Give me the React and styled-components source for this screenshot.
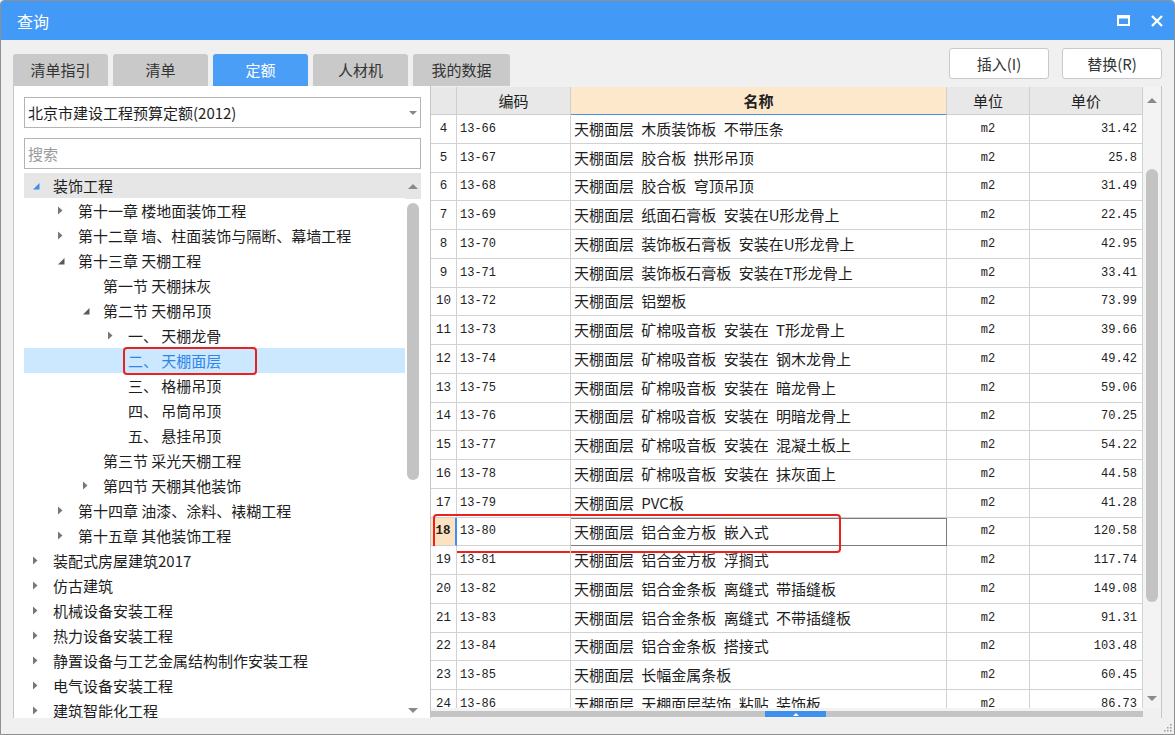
import React from "react";
import styled, { createGlobalStyle } from "styled-components";

const GlobalStyle = createGlobalStyle`
  html, body {
    margin: 0;
    padding: 0;
  }
  body {
    font-family: "Noto Sans CJK SC", "Microsoft YaHei", sans-serif;
    font-size: 15px;
    color: #1e1e1e;
  }
  * {
    box-sizing: border-box;
  }
`;

const Window = styled.div`
  width: 1175px;
  height: 735px;
  display: flex;
  flex-direction: column;
  background: #f0f0f0;
  border: 1px solid #8f8f8f;
  border-radius: 4px 4px 0 0;
  overflow: hidden;
`;

const TitleBar = styled.div`
  height: 39px;
  flex: none;
  background: #4399f6;
  display: flex;
  align-items: center;
  padding: 0 0 0 16px;
  color: #fff;
`;

const Title = styled.div`
  flex: 1;
  font-size: 16px;
  line-height: 20px;
`;

const TitleButton = styled.div`
  width: 34px;
  height: 30px;
  display: flex;
  align-items: center;
  justify-content: center;
`;

const Body = styled.div`
  flex: 1;
  display: flex;
  flex-direction: column;
  padding: 0 12px;
`;

const TopBar = styled.div`
  height: 46px;
  flex: none;
  display: flex;
  justify-content: space-between;
  align-items: flex-start;
`;

const Tabs = styled.div`
  display: flex;
  gap: 5px;
  margin-top: 14px;
`;

const Tab = styled.div`
  width: ${(p) => (p.$wide ? 97 : 95)}px;
  height: 32px;
  border-radius: 3px 3px 0 0;
  background: ${(p) => (p.$active ? "#4a9ef6" : "#c9c9c9")};
  color: ${(p) => (p.$active ? "#fff" : "#333")};
  display: flex;
  align-items: center;
  justify-content: center;
  line-height: 20px;
`;

const Buttons = styled.div`
  display: flex;
  gap: 13px;
  margin-top: 8px;
`;

const Button = styled.div`
  width: 100px;
  height: 31px;
  background: #fff;
  border: 1px solid #c9c9c9;
  border-radius: 3px;
  display: flex;
  align-items: center;
  justify-content: center;
  color: #333;
  line-height: 20px;
`;

const Content = styled.div`
  height: 632px;
  flex: none;
  display: flex;
`;

const LeftPane = styled.div`
  width: 418px;
  flex: none;
  background: #fff;
  border-left: 1px solid #c6c6c6;
  border-right: 1px solid #c6c6c6;
  padding: 11px 9px 0 10px;
  display: flex;
  flex-direction: column;
`;

const Field = styled.div`
  height: 31px;
  flex: none;
  border: 1px solid #b4b4b4;
  display: flex;
  align-items: center;
  padding: 0 3px 0 3px;
  margin-bottom: ${(p) => p.$gap}px;
  color: ${(p) => (p.$placeholder ? "#9a9a9a" : "#1e1e1e")};
  line-height: 20px;
`;

const FieldText = styled.span`
  flex: 1;
`;

const Tree = styled.div`
  flex: 1;
  display: flex;
  overflow: hidden;
`;

const TreeList = styled.div`
  flex: 1;
  overflow: hidden;
`;

const TreeRow = styled.div`
  height: 25px;
  display: flex;
  align-items: center;
  padding-left: ${(p) => 5 + p.$level * 25}px;
  background: ${(p) => (p.$selected ? "#cce8ff" : p.$head ? "#e6e6e6" : "transparent")};
  color: ${(p) => (p.$selected ? "#2f86e8" : "#1e1e1e")};
  white-space: nowrap;
  line-height: 20px;
`;

const Expander = styled.span`
  width: 24px;
  flex: none;
  display: flex;
  align-items: center;
  padding-left: 3px;
`;

const Marked = styled.span`
  position: relative;

  &::after {
    content: "";
    position: absolute;
    left: -5px;
    right: -36px;
    top: -4px;
    bottom: -4px;
    border: 2px solid #e8231f;
    border-radius: 4px;
  }
`;

const VScroll = styled.div`
  width: ${(p) => p.$w}px;
  flex: none;
  display: flex;
  flex-direction: column;
  align-items: center;
  background: ${(p) => p.$bg};
`;

const ScrollArrow = styled.div`
  height: ${(p) => p.$h}px;
  flex: none;
  width: 100%;
  display: flex;
  align-items: center;
  justify-content: center;
  background: ${(p) => p.$bg || "transparent"};
`;

const ScrollTrack = styled.div`
  flex: 1;
  width: 100%;
  display: flex;
  justify-content: center;
  padding-top: ${(p) => p.$top}px;
`;

const Thumb = styled.div`
  width: 12px;
  height: ${(p) => p.$h}px;
  border-radius: 6px;
  background: #c3c3c3;
`;

const GridPane = styled.div`
  flex: 1;
  display: flex;
  flex-direction: column;
  border-right: 1px solid #c6c6c6;
  padding-top: 1px;
`;

const GridMain = styled.div`
  flex: 1;
  display: flex;
  overflow: hidden;
`;

const Table = styled.div`
  width: 712px;
  flex: none;
  background: #fff;
  overflow: hidden;
`;

const cols = "26px 114px 376px 83px 113px";

const HeaderRow = styled.div`
  display: grid;
  grid-template-columns: ${cols};
  height: 28px;
`;

const HeadCell = styled.div`
  display: flex;
  align-items: center;
  justify-content: center;
  background: ${(p) => (p.$hot ? "#fde8cb" : "#e8e8e8")};
  border-right: 1px solid #cfcfcf;
  border-bottom: 1px solid ${(p) => (p.$hot ? "#4a90e2" : "#cfcfcf")};
  font-weight: ${(p) => (p.$hot ? 700 : 400)};
  color: #222;
  line-height: 20px;
`;

const Row = styled.div`
  display: grid;
  grid-template-columns: ${cols};
  height: 28.75px;
  position: relative;

  ${(p) =>
    p.$marked &&
    `
    &::after {
      content: "";
      position: absolute;
      left: 2px;
      top: -4px;
      width: 404px;
      height: 35px;
      border: 2px solid #e8231f;
      border-radius: 4px;
    }
  `}
`;

const Cell = styled.div`
  display: flex;
  align-items: center;
  justify-content: ${(p) => p.$align || "flex-start"};
  padding: 0 ${(p) => (p.$align === "flex-end" ? 5 : 3)}px 0 3px;
  border-right: 1px solid #d2d2d2;
  border-bottom: 1px solid #d2d2d2;
  white-space: nowrap;
  overflow: hidden;
  line-height: 20px;
`;

const NumCell = styled(Cell)`
  justify-content: center;
  padding: 0;
  font-family: "Liberation Mono", monospace;
  font-size: 12.5px;
  background: ${(p) => (p.$current ? "#fde2c2" : "#fff")};
  font-weight: ${(p) => (p.$current ? 700 : 400)};
  border-right: ${(p) => (p.$current ? "2px solid #3d8ff0" : "1px solid #d2d2d2")};
`;

const MonoCell = styled(Cell)`
  font-family: "Liberation Mono", monospace;
  font-size: 12px;
  color: #222;
`;

const NameCell = styled(Cell)`
  word-spacing: 4px;
  border: ${(p) => (p.$focus ? "1px solid #7c7c7c" : undefined)};
  border-left: none;
`;

const HScroll = styled.div`
  height: 10px;
  flex: none;
  width: 712px;
  padding-top: 3px;
  background: #f3f3f3;
`;

const HTrack = styled.div`
  height: 6px;
  background: #c4c4c4;
  position: relative;
`;

const Splitter = styled.div`
  position: absolute;
  left: 334px;
  top: 0;
  width: 61px;
  height: 6px;
  background: #3f90ec;
  display: flex;
  justify-content: center;
  align-items: center;
`;

const Footer = styled.div`
  flex: 1;
  display: flex;
  justify-content: flex-end;
  align-items: flex-end;
  padding: 0 0 2px 0;
  margin-right: -10px;
`;

const treeData = [
  { level: 0, text: "装饰工程", state: "open", head: true },
  { level: 1, text: "第十一章 楼地面装饰工程", state: "closed" },
  { level: 1, text: "第十二章 墙、柱面装饰与隔断、幕墙工程", state: "closed" },
  { level: 1, text: "第十三章 天棚工程", state: "open" },
  { level: 2, text: "第一节 天棚抹灰" },
  { level: 2, text: "第二节 天棚吊顶", state: "open" },
  { level: 3, text: "一、 天棚龙骨", state: "closed" },
  { level: 3, text: "二、 天棚面层", selected: true },
  { level: 3, text: "三、 格栅吊顶" },
  { level: 3, text: "四、 吊筒吊顶" },
  { level: 3, text: "五、 悬挂吊顶" },
  { level: 2, text: "第三节 采光天棚工程" },
  { level: 2, text: "第四节 天棚其他装饰", state: "closed" },
  { level: 1, text: "第十四章 油漆、涂料、裱糊工程", state: "closed" },
  { level: 1, text: "第十五章 其他装饰工程", state: "closed" },
  { level: 0, text: "装配式房屋建筑2017", state: "closed" },
  { level: 0, text: "仿古建筑", state: "closed" },
  { level: 0, text: "机械设备安装工程", state: "closed" },
  { level: 0, text: "热力设备安装工程", state: "closed" },
  { level: 0, text: "静置设备与工艺金属结构制作安装工程", state: "closed" },
  { level: 0, text: "电气设备安装工程", state: "closed" },
  { level: 0, text: "建筑智能化工程", state: "closed" },
];

const rows = [
  [4, "13-66", "天棚面层 木质装饰板 不带压条", "31.42"],
  [5, "13-67", "天棚面层 胶合板 拱形吊顶", "25.8"],
  [6, "13-68", "天棚面层 胶合板 穹顶吊顶", "31.49"],
  [7, "13-69", "天棚面层 纸面石膏板 安装在U形龙骨上", "22.45"],
  [8, "13-70", "天棚面层 装饰板石膏板 安装在U形龙骨上", "42.95"],
  [9, "13-71", "天棚面层 装饰板石膏板 安装在T形龙骨上", "33.41"],
  [10, "13-72", "天棚面层 铝塑板", "73.99"],
  [11, "13-73", "天棚面层 矿棉吸音板 安装在 T形龙骨上", "39.66"],
  [12, "13-74", "天棚面层 矿棉吸音板 安装在 钢木龙骨上", "49.42"],
  [13, "13-75", "天棚面层 矿棉吸音板 安装在 暗龙骨上", "59.06"],
  [14, "13-76", "天棚面层 矿棉吸音板 安装在 明暗龙骨上", "70.25"],
  [15, "13-77", "天棚面层 矿棉吸音板 安装在 混凝土板上", "54.22"],
  [16, "13-78", "天棚面层 矿棉吸音板 安装在 抹灰面上", "44.58"],
  [17, "13-79", "天棚面层 PVC板", "41.28"],
  [18, "13-80", "天棚面层 铝合金方板 嵌入式", "120.58"],
  [19, "13-81", "天棚面层 铝合金方板 浮搁式", "117.74"],
  [20, "13-82", "天棚面层 铝合金条板 离缝式 带插缝板", "149.08"],
  [21, "13-83", "天棚面层 铝合金条板 离缝式 不带插缝板", "91.31"],
  [22, "13-84", "天棚面层 铝合金条板 搭接式", "103.48"],
  [23, "13-85", "天棚面层 长幅金属条板", "60.45"],
  [24, "13-86", "天棚面层 天棚面层装饰 粘贴 装饰板", "86.73"],
];

function Arrow({ state, blue }) {
  if (state === "closed") {
    return (
      <svg width="6" height="9" viewBox="0 0 6 9">
        <path d="M1 0.5 L5.5 4.5 L1 8.5 Z" fill="#777" />
      </svg>
    );
  }
  if (state === "open") {
    return (
      <svg width="8" height="8" viewBox="0 0 8 8">
        <path d="M7.5 1 L7.5 7.5 L1 7.5 Z" fill={blue ? "#3d8fe8" : "#5a5a5a"} />
      </svg>
    );
  }
  return null;
}

function Tri({ up, color = "#8a8a8a", w = 10, h = 5 }) {
  return (
    <svg width={w} height={h} viewBox="0 0 10 5">
      <path d={up ? "M0 5 L5 0 L10 5 Z" : "M0 0 L10 0 L5 5 Z"} fill={color} />
    </svg>
  );
}

export default function App() {
  return (
    <>
      <GlobalStyle />
      <Window>
        <TitleBar>
          <Title>查询</Title>
          <TitleButton>
            <svg width="13" height="11" viewBox="0 0 13 11">
              <rect x="1" y="1" width="11" height="9" fill="none" stroke="#fff" strokeWidth="2" />
              <rect x="1" y="1" width="11" height="2.5" fill="#fff" />
            </svg>
          </TitleButton>
          <TitleButton>
            <svg width="12" height="12" viewBox="0 0 12 12">
              <path d="M1 1 L11 11 M11 1 L1 11" stroke="#fff" strokeWidth="2.4" />
            </svg>
          </TitleButton>
        </TitleBar>
        <Body>
          <TopBar>
            <Tabs>
              <Tab>清单指引</Tab>
              <Tab>清单</Tab>
              <Tab $active>定额</Tab>
              <Tab>人材机</Tab>
              <Tab $wide>我的数据</Tab>
            </Tabs>
            <Buttons>
              <Button>插入(I)</Button>
              <Button>替换(R)</Button>
            </Buttons>
          </TopBar>
          <Content>
            <LeftPane>
              <Field $gap={10}>
                <FieldText>北京市建设工程预算定额(2012)</FieldText>
                <Tri color="#888" w={8} h={4} />
              </Field>
              <Field $gap={4} $placeholder>
                搜索
              </Field>
              <Tree>
                <TreeList>
                  {treeData.map((n, i) => (
                    <TreeRow key={i} $level={n.level} $head={n.head} $selected={n.selected}>
                      <Expander>
                        <Arrow state={n.state} blue={n.head} />
                      </Expander>
                      {n.selected ? <Marked>{n.text}</Marked> : n.text}
                    </TreeRow>
                  ))}
                </TreeList>
                <VScroll $w={16} $bg="#fff">
                  <ScrollArrow $h={26} $bg="#e6e6e6">
                    <Tri up />
                  </ScrollArrow>
                  <ScrollTrack $top={4}>
                    <Thumb $h={277} />
                  </ScrollTrack>
                  <ScrollArrow $h={16}>
                    <Tri />
                  </ScrollArrow>
                </VScroll>
              </Tree>
            </LeftPane>
            <GridPane>
              <GridMain>
                <Table>
                  <HeaderRow>
                    <HeadCell />
                    <HeadCell>编码</HeadCell>
                    <HeadCell $hot>名称</HeadCell>
                    <HeadCell>单位</HeadCell>
                    <HeadCell>单价</HeadCell>
                  </HeaderRow>
                  {rows.map(([n, code, name, price]) => {
                    const cur = n === 18;
                    return (
                      <Row key={n} $marked={cur}>
                        <NumCell $current={cur}>{n}</NumCell>
                        <MonoCell>{code}</MonoCell>
                        <NameCell $focus={cur}>{name}</NameCell>
                        <MonoCell $align="center">m2</MonoCell>
                        <MonoCell $align="flex-end">{price}</MonoCell>
                      </Row>
                    );
                  })}
                </Table>
                <VScroll $w={18} $bg="#f3f3f3">
                  <ScrollArrow $h={26}>
                    <Tri up />
                  </ScrollArrow>
                  <ScrollTrack $top={56}>
                    <Thumb $h={433} />
                  </ScrollTrack>
                  <ScrollArrow $h={20}>
                    <Tri />
                  </ScrollArrow>
                </VScroll>
              </GridMain>
              <HScroll>
                <HTrack>
                  <Splitter>
                    <Tri up color="#fff" w={6} h={3} />
                  </Splitter>
                </HTrack>
              </HScroll>
            </GridPane>
          </Content>
          <Footer>
            <svg width="10" height="10" viewBox="0 0 10 10">
              {[
                [8, 2], [8, 5], [5, 5], [8, 8], [5, 8], [2, 8],
              ].map(([x, y]) => (
                <rect key={`${x}-${y}`} x={x} y={y} width="1.5" height="1.5" fill="#9a9a9a" />
              ))}
            </svg>
          </Footer>
        </Body>
      </Window>
    </>
  );
}
